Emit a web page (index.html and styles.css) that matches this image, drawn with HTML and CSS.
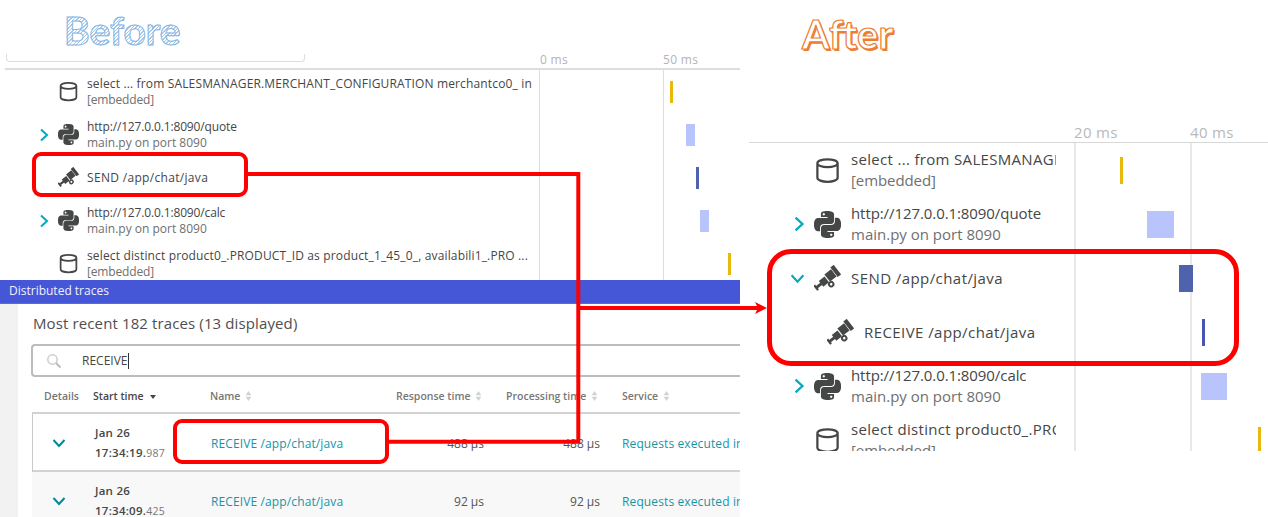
FILE: index.html
```html
<!DOCTYPE html>
<html lang="en">
<head>
  <meta charset="UTF-8">
  <meta name="viewport" content="width=device-width, initial-scale=1.0">
  <title>Before and after</title>
  <link rel="stylesheet" href="styles.css">
</head>
<body>
  <svg class="defs" width="0" height="0">
    <symbol id="db" viewBox="0 0 24 24">
      <path d="M3 5.500v13c0 2 4 3.500 9 3.500s9-1.500 9-3.500v-13M3 5.500c0-2 4-3.500 9-3.500s9 1.500 9 3.500-4 3.500-9 3.500-9-1.500-9-3.500z" fill="none" stroke="currentColor" stroke-width="2"/>
    </symbol>
    <symbol id="py" viewBox="0 0 24 24">
      <path fill="currentColor" d="M14.25.18l.9.2.73.26.59.3.45.32.34.34.25.34.16.33.1.3.04.26.02.2-.01.13V8.500l-.05.63-.13.55-.21.46-.26.38-.3.31-.33.25-.35.19-.35.14-.33.1-.3.07-.26.04-.21.02H8.770l-.69.05-.59.14-.5.22-.41.27-.33.32-.27.35-.2.36-.15.37-.1.35-.07.32-.04.27-.02.21v3.060H3.170l-.21-.03-.28-.07-.32-.12-.35-.18-.36-.26-.36-.36-.35-.46-.32-.59-.28-.73-.21-.88-.14-1.050-.05-1.230.06-1.220.16-1.040.24-.87.32-.71.36-.57.4-.44.42-.33.42-.24.4-.16.36-.1.32-.05.24-.01h.16l.06.01h8.160v-.83H6.180l-.01-2.750-.02-.37.05-.34.11-.31.17-.28.25-.26.31-.23.38-.2.44-.18.51-.15.58-.12.64-.1.71-.06.77-.04.84-.02 1.270.05zm-6.300 1.980l-.23.33-.08.41.08.41.23.34.33.22.41.09.41-.09.33-.22.23-.34.08-.41-.08-.41-.23-.33-.33-.22-.41-.09-.41.09zm13.090 3.950l.28.06.32.12.35.18.36.27.36.35.35.47.32.59.28.73.21.88.14 1.040.05 1.230-.06 1.230-.16 1.040-.24.86-.32.71-.36.57-.4.45-.42.33-.42.24-.4.16-.36.09-.32.05-.24.02-.16-.01h-8.220v.82h5.840l.01 2.760.02.36-.05.34-.11.31-.17.29-.25.25-.31.24-.38.2-.44.17-.51.15-.58.13-.64.09-.71.07-.77.04-.84.01-1.270-.04-1.070-.14-.9-.2-.73-.25-.59-.3-.45-.33-.34-.34-.25-.34-.16-.33-.1-.3-.04-.25-.02-.2.01-.13v-5.340l.05-.64.13-.54.21-.46.26-.38.3-.32.33-.24.35-.2.35-.14.33-.1.3-.06.26-.04.21-.02.13-.01h5.840l.69-.05.59-.14.5-.21.41-.28.33-.32.27-.35.2-.36.15-.36.1-.35.07-.32.04-.28.02-.21V6.070h2.090l.14.01zm-6.470 14.250l-.23.33-.08.41.08.41.23.33.33.23.41.08.41-.08.33-.23.23-.33.08-.41-.08-.41-.23-.33-.33-.23-.41-.08-.41.08z"/>
    </symbol>
    <symbol id="msg" viewBox="0 0 24 24">
      <g transform="rotate(-38 12 12)" fill="currentColor">
        <rect x="-2" y="9.500" width="2" height="5.500"/>
        <rect x="-.5" y="11" width="5.500" height="2.500"/>
        <rect x="4.500" y="9" width="6.500" height="6.500"/>
        <rect x="12" y="7.500" width="7.500" height="8"/>
        <rect x="20" y="5.800" width="3.800" height="10.800"/>
        <circle cx="11.500" cy="18" r="2" fill="none" stroke="currentColor" stroke-width="1.700"/>
      </g>
    </symbol>
    <symbol id="right" viewBox="0 0 10 14">
      <path d="M2 1.500 8 7l-6 5.500" fill="none" stroke="currentColor" stroke-width="2"/>
    </symbol>
    <symbol id="down" viewBox="0 0 14 10">
      <path d="M1.500 2 7 8l5.500-6" fill="none" stroke="currentColor" stroke-width="2"/>
    </symbol>
    <symbol id="sort" viewBox="0 0 8 12">
      <path d="M4 0 7.500 5H.5zM4 12 .5 7h7z" fill="currentColor"/>
    </symbol>
  </svg>

  <div class="collage">
    <section class="shot-left">
      <div class="wf-head">
        <div class="wf-head-main">
          <h1 class="title-before">Before</h1>
          <div class="card-edge"></div>
        </div>
        <div class="axis">
          <span class="tick">0 ms</span>
          <span class="tick">50 ms</span>
        </div>
      </div>

      <div class="wf">
        <div class="row">
          <div class="name">
            <span class="chev"></span>
            <svg class="icon"><use href="#db"/></svg>
            <div class="label"><div class="main t-select">select ... from SALESMANAGER.MERCHANT_CONFIGURATION merchantco0_ in</div><div class="sub t-tight">[embedded]</div></div>
          </div>
          <div class="timeline"><i class="bar yellow" style="margin-left:131px;width:3px"></i></div>
        </div>
        <div class="row">
          <div class="name">
            <svg class="chev"><use href="#right"/></svg>
            <svg class="icon"><use href="#py"/></svg>
            <div class="label"><div class="main t-tight">http://127.0.0.1:8090/quote</div><div class="sub">main.py on port 8090</div></div>
          </div>
          <div class="timeline"><i class="bar light" style="margin-left:147px;width:9px"></i></div>
        </div>
        <div class="row">
          <div class="name">
            <span class="chev"></span>
            <svg class="icon"><use href="#msg"/></svg>
            <div class="label"><div class="main t-msg">SEND /app/chat/java</div></div>
          </div>
          <div class="timeline"><i class="bar dark" style="margin-left:157px;width:3px"></i></div>
        </div>
        <div class="row">
          <div class="name">
            <svg class="chev"><use href="#right"/></svg>
            <svg class="icon"><use href="#py"/></svg>
            <div class="label"><div class="main t-tight">http://127.0.0.1:8090/calc</div><div class="sub">main.py on port 8090</div></div>
          </div>
          <div class="timeline"><i class="bar light" style="margin-left:161px;width:9px"></i></div>
        </div>
        <div class="row">
          <div class="name">
            <span class="chev"></span>
            <svg class="icon"><use href="#db"/></svg>
            <div class="label"><div class="main t-select">select distinct product0_.PRODUCT_ID as product_1_45_0_, availabili1_.PRO ...</div><div class="sub t-tight">[embedded]</div></div>
          </div>
          <div class="timeline"><i class="bar yellow" style="margin-left:189px;width:3px"></i></div>
        </div>
      </div>

      <div class="bluebar">Distributed traces</div>

      <div class="traces">
        <h2 class="traces-title">Most recent 182 traces (13 displayed)</h2>
        <div class="search">
          <svg class="search-icon" viewBox="0 0 16 16"><circle cx="6.500" cy="6.500" r="4.700" fill="none" stroke="#ccc" stroke-width="1.500"/><path d="m10 10 4.500 4.500" stroke="#bbb" stroke-width="2"/></svg>
          <span class="search-text">RECEIVE</span>
        </div>
        <div class="tr thead">
          <div class="c-details">Details</div>
          <div class="c-start">Start time <span class="caret"></span></div>
          <div>Name <svg class="sort"><use href="#sort"/></svg></div>
          <div class="num">Response time <svg class="sort"><use href="#sort"/></svg></div>
          <div class="num">Processing time <svg class="sort"><use href="#sort"/></svg></div>
          <div class="c-service">Service <svg class="sort"><use href="#sort"/></svg></div>
        </div>
        <div class="tr tbody selected">
          <div class="c-details"><svg class="chev-t"><use href="#down"/></svg></div>
          <div class="when">Jan 26<br>17:34:19.<small>987</small></div>
          <div class="link">RECEIVE /app/chat/java</div>
          <div class="num">488 µs</div>
          <div class="num">488 µs</div>
          <div class="link c-service">Requests executed in background threads</div>
        </div>
        <div class="tr tbody alt">
          <div class="c-details"><svg class="chev-t"><use href="#down"/></svg></div>
          <div class="when">Jan 26<br>17:34:09.<small>425</small></div>
          <div class="link">RECEIVE /app/chat/java</div>
          <div class="num">92 µs</div>
          <div class="num">92 µs</div>
          <div class="link c-service">Requests executed in background threads</div>
        </div>
      </div>
    </section>

    <section class="shot-right">
      <div class="wf-head">
        <div class="wf-head-main">
          <h1 class="title-after">After</h1>
        </div>
        <div class="axis">
          <span class="tick">20 ms</span>
          <span class="tick">40 ms</span>
        </div>
      </div>

      <div class="wf">
        <div class="row">
          <div class="name">
            <span class="chev"></span>
            <svg class="icon"><use href="#db"/></svg>
            <div class="label"><div class="main t-select">select ... from SALESMANAGER.MERCHANT_CONFIGURATION</div><div class="sub t-tight">[embedded]</div></div>
          </div>
          <div class="timeline"><i class="bar yellow" style="margin-left:46px;width:3px"></i></div>
        </div>
        <div class="row">
          <div class="name">
            <svg class="chev"><use href="#right"/></svg>
            <svg class="icon"><use href="#py"/></svg>
            <div class="label"><div class="main t-tight">http://127.0.0.1:8090/quote</div><div class="sub">main.py on port 8090</div></div>
          </div>
          <div class="timeline"><i class="bar light" style="margin-left:73px;width:27px"></i></div>
        </div>
        <div class="row">
          <div class="name">
            <svg class="chev chev-open"><use href="#down"/></svg>
            <svg class="icon"><use href="#msg"/></svg>
            <div class="label"><div class="main t-msg">SEND /app/chat/java</div></div>
          </div>
          <div class="timeline"><i class="bar dark" style="margin-left:105px;width:14px"></i></div>
        </div>
        <div class="row">
          <div class="name nested">
            <span class="chev"></span>
            <svg class="icon"><use href="#msg"/></svg>
            <div class="label"><div class="main t-msg">RECEIVE /app/chat/java</div></div>
          </div>
          <div class="timeline"><i class="bar mid" style="margin-left:128px;width:3px"></i></div>
        </div>
        <div class="row">
          <div class="name">
            <svg class="chev"><use href="#right"/></svg>
            <svg class="icon"><use href="#py"/></svg>
            <div class="label"><div class="main t-tight">http://127.0.0.1:8090/calc</div><div class="sub">main.py on port 8090</div></div>
          </div>
          <div class="timeline"><i class="bar light" style="margin-left:127px;width:26px"></i></div>
        </div>
        <div class="row">
          <div class="name">
            <span class="chev"></span>
            <svg class="icon"><use href="#db"/></svg>
            <div class="label"><div class="main t-select">select distinct product0_.PRODUCT_ID as product</div><div class="sub t-tight">[embedded]</div></div>
          </div>
          <div class="timeline"><i class="bar yellow" style="margin-left:184px;width:3px"></i></div>
        </div>
      </div>
    </section>

    <!-- red annotations drawn over both screenshots -->
    <div class="mark mark-send"></div>
    <div class="mark mark-receive"></div>
    <div class="mark mark-after"></div>
    <svg class="wires" width="1268" height="517">
      <path d="M245 174H578.300V441.700H386M578.300 308H762" fill="none" stroke="#f00" stroke-width="4"/>
      <path d="M755 302l12 6-12 6 3-6z" fill="#f00"/>
    </svg>
  </div>
</body>
</html>
```

FILE: styles.css
```css
* {
  box-sizing: border-box;
}
html, body {
  margin: 0;
  height: 517px;
  overflow: hidden;
  background: #fff;
}
body {
  font-family: "Open Sans", sans-serif;
  color: #454646;
}
.defs {
  position: absolute;
}
.collage {
  position: relative;
  display: flex;
  gap: 9px;
  width: 1268px;
  height: 517px;
  overflow: hidden;
}

/* titles */
.title-before, .title-after {
  margin: 0;
  font-family: Lato, sans-serif;
  font-weight: 700;
}
.title-before {
  margin-left: 59px;
  width: 125px;
  height: 54px;
  padding-top: 8px;
  font-size: 39px;
  line-height: 44px;
  color: transparent;
  -webkit-text-stroke: 1px #86b5e4;
  background: repeating-linear-gradient(135deg, #a9c9ea 0 1px, #fff 1px 2.500px);
  -webkit-background-clip: text;
  background-clip: text;
}
.title-after {
  padding: 11px 0 0 53px;
  font-size: 40px;
  line-height: 46px;
  color: #fff;
  -webkit-text-stroke: 1.2px #ed7d31;
  text-shadow: 1.500px 1.500px 0 #ed7d31;
}
.card-edge {
  width: 299px;
  height: 8px;
  margin-left: 1px;
  border: 1px solid #ddd;
  border-top: 0;
  border-radius: 0 0 4px 4px;
}

/* left screenshot */
.shot-left {
  width: 740px;
  flex: none;
  height: 517px;
  overflow: hidden;
}
.shot-left .wf-head {
  display: grid;
  grid-template-columns: 534px 1fr;
  height: 70px;
  margin-left: 5px;
  border-bottom: 2px solid #ddd;
}
.shot-left .wf-head-main {
  height: 68px;
}
.axis {
  display: flex;
  align-items: flex-end;
}
.shot-left .tick {
  width: 123px;
  padding-left: 1px;
  font-size: 12px;
  line-height: 14px;
  color: #b4b4b4;
  letter-spacing: .3px;
  margin-bottom: 1px;
}
.shot-left .wf {
  height: 210px;
  overflow: hidden;
}
.row {
  display: grid;
}
.shot-left .row {
  grid-template-columns: 539px 1fr;
  height: 43px;
}
.name {
  display: flex;
  align-items: center;
  min-width: 0;
}
.shot-left .name {
  padding: 0 7px 0 38px;
}
.chev {
  flex: none;
  color: #00a9c0;
}
.shot-left .chev {
  width: 12px;
  height: 14px;
  margin-right: 8px;
}
.icon {
  flex: none;
  color: #454646;
}
.shot-left .icon {
  width: 21px;
  height: 21px;
  margin-right: 8px;
}
.label {
  min-width: 0;
  overflow: hidden;
  white-space: nowrap;
}
.shot-left .main, .shot-left .sub {
  font-size: 12px;
  line-height: 16px;
}
.sub {
  color: #6f6f6f;
}

/* tracking to bring Open Sans closer to the original widths */
.t-select { letter-spacing: .15px; }
.t-tight { letter-spacing: -.15px; }
.t-msg { letter-spacing: .32px; }
.shot-right .t-select { letter-spacing: .32px; }
.shot-right .t-msg { letter-spacing: .43px; }
.shot-right .t-tight { letter-spacing: -.08px; }

.timeline {
  display: flex;
  align-items: center;
}
.shot-left .timeline {
  background: linear-gradient(#ddd, #ddd) 0 0 / 1px 100% no-repeat,
              linear-gradient(#ddd, #ddd) 124px 0 / 1px 100% no-repeat;
}
.bar {
  display: block;
}
.shot-left .bar {
  height: 22px;
}
.yellow { background: #e8b90d; }
.light { background: #b8c4fb; }
.dark { background: #4f63ad; }
.mid { background: #4556b7; }

.bluebar {
  height: 24px;
  padding-left: 9px;
  background: #4556d7;
  border-bottom: 1px solid #5b6bdf;
  color: #f0f2ff;
  font-size: 12px;
  line-height: 22px;
}
.traces {
  height: 213px;
  border-left: 18px solid #f2f2f2;
  overflow: hidden;
}
.traces-title {
  margin: 0;
  padding: 9px 0 0 15px;
  height: 40px;
  font-size: 15px;
  line-height: 20px;
  font-weight: 400;
  color: #4f4f4f;
  letter-spacing: .12px;
}
.search {
  display: flex;
  align-items: center;
  height: 33px;
  margin-left: 13px;
  border: 2px solid #bcbcbc;
  border-right: 0;
  border-radius: 4px 0 0 4px;
}
.search-icon {
  width: 16px;
  height: 16px;
  margin-left: 13px;
}
.search-text {
  margin-left: 20px;
  padding-right: 1px;
  border-right: 1px solid #333;
  font-size: 12px;
  line-height: 16px;
}
.tr {
  display: grid;
  grid-template-columns: 61px 117px 186px 88px 116px 1fr;
  align-items: center;
  margin-left: 14px;
  white-space: nowrap;
}
.thead {
  height: 37px;
  padding-top: 3px;
  border-bottom: 2px solid #d2d2d2;
  font-size: 10.500px;
  font-weight: 600;
  color: #777;
}
.thead .num {
  padding-right: 2px;
}
.c-start {
  color: #454646;
}
.caret {
  display: inline-block;
  margin: 0 0 1px 4px;
  border: 3.500px solid transparent;
  border-top: 4px solid #454646;
  border-bottom: 0;
}
.sort {
  width: 7px;
  height: 10px;
  margin-left: 2px;
  color: #d2d2d2;
  vertical-align: -1px;
}
.c-details {
  padding-left: 12px;
}
.num {
  text-align: right;
}
.tbody {
  height: 58px;
  font-size: 12px;
  color: #555;
}
.selected {
  box-shadow: inset 1px 0 0 #c8c8c8, inset 0 -2px 0 #d2d2d2;
}
.alt {
  background: #f8f8f8;
}
.chev-t {
  width: 14px;
  height: 10px;
  margin-left: 8px;
  color: #00899a;
  display: block;
}
.when {
  padding-left: 2px;
  font-size: 11.500px;
  line-height: 20px;
  font-weight: 600;
  color: #454646;
  letter-spacing: .25px;
}
.when small {
  font-size: 10.500px;
  font-weight: 400;
  color: #777;
}
.link {
  padding-left: 1px;
  color: #1496a8;
  letter-spacing: .12px;
  overflow: hidden;
}
.c-service {
  padding-left: 22px;
  min-width: 0;
}

/* right screenshot */
.shot-right {
  flex: 1;
  min-width: 0;
}
.shot-right .wf-head {
  display: grid;
  grid-template-columns: 325px 1fr;
  height: 143px;
  border-bottom: 1px solid #d8d8d8;
}
.shot-right .tick {
  width: 116px;
  font-size: 15px;
  line-height: 18px;
  color: #b8b8b8;
  letter-spacing: .3px;
  margin-bottom: 1px;
}
.shot-right .wf {
  height: 308px;
  overflow: hidden;
}
.shot-right .row {
  grid-template-columns: 325px 1fr;
  height: 54px;
}
.shot-right .name {
  padding: 0 18px 0 41px;
}
.shot-right .chev {
  width: 15px;
  height: 16px;
  margin-right: 9px;
}
.shot-right .chev-open {
  height: 11px;
}
.shot-right svg.chev:not(.chev-open) {
  padding-left: 3px;
}
.shot-right .icon {
  width: 27px;
  height: 27px;
  margin-right: 10px;
}
.shot-right .nested {
  padding-left: 54px;
}
.shot-right .main, .shot-right .sub {
  font-size: 15px;
  line-height: 21px;
}
.shot-right .timeline {
  background: linear-gradient(#e8e8e8, #e8e8e8) 0 0 / 2px 100% no-repeat,
              linear-gradient(#e8e8e8, #e8e8e8) 116px 0 / 2px 100% no-repeat;
}
.shot-right .bar {
  height: 27px;
}

/* annotations */
.mark {
  position: absolute;
  border: 4px solid #f00;
  border-radius: 9px;
}
.mark-send {
  left: 32px;
  top: 152px;
  width: 216px;
  height: 45px;
}
.mark-receive {
  left: 173px;
  top: 419px;
  width: 216px;
  height: 45px;
}
.mark-after {
  left: 767px;
  top: 249px;
  width: 472px;
  height: 117px;
  border-width: 5px;
  border-radius: 24px;
}
.wires {
  position: absolute;
  left: 0;
  top: 0;
  pointer-events: none;
}
```
